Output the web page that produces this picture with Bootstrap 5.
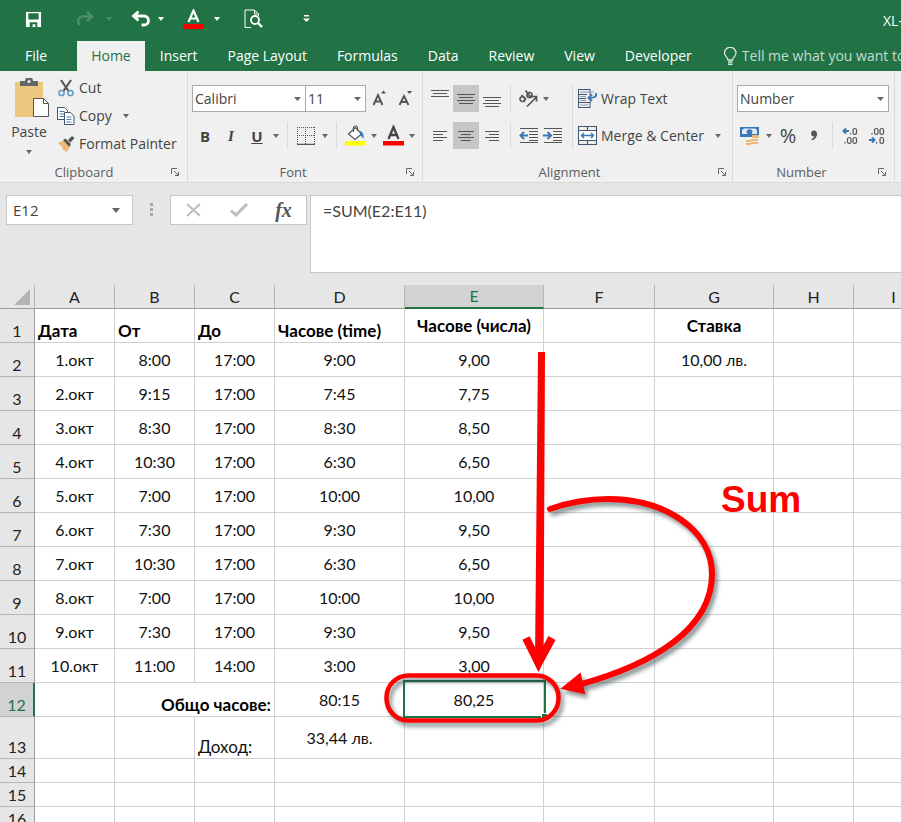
<!DOCTYPE html>
<html lang="bg">
<head>
<meta charset="utf-8">
<meta name="viewport" content="width=device-width, initial-scale=1">
<title>XL</title>
<link href="https://cdn.jsdelivr.net/npm/bootstrap@5.3.0/dist/css/bootstrap.min.css" rel="stylesheet">
<style>
:root{--green:#217346;--ui:"Open Sans","Noto Sans",sans-serif;--cells:Lato,"Open Sans",sans-serif}
body{font-family:var(--ui);font-size:14px;line-height:20px;color:#444}
svg{display:block;flex:none}
.titlebar{background:var(--green);height:41px;padding:0 0 3px 23px;color:#fff}
.tabs{background:var(--green);height:30px;padding-left:10px}
.tabs .tab{color:#fff;padding:5px 15px;text-decoration:none;white-space:nowrap;height:30px}
.tabs .tab.active{background:#f0f0f0;color:var(--green);padding:5px 14px}
.file-tab{margin-right:15px}
.tell{color:#c5dccf;background:none;border:0;outline:0;width:240px;padding:0}
.tell::placeholder{color:#c5dccf;opacity:1}
.ribbon{background:#f0f0f0;height:112px;border-bottom:1px solid #d9d9d9;overflow:hidden}
.group{border-right:1px solid #dadada;padding:14px 4px 0}
.clip-group{width:188px;padding:3px 4px 0 9px}
.font-group{width:235px}
.align-group{width:310px}
.num-group{width:162px}
.group-foot{font-size:13px;color:#5c5c5c;height:20px;margin-top:auto}
.launch{right:0;top:6px}
.tool{background:none;border:0;padding:0;color:#444;display:flex;align-items:center;justify-content:center;height:27px;width:26px;white-space:nowrap}
.tool.on{background:#c6c6c6}
.tool.text{width:auto;gap:4px;justify-content:flex-start}
.tool.drop{width:12px}
.tool.mid{width:24px}
.tool.bar{color:#fff;width:20px;height:30px}
.tool.line{height:28px}
.vline{width:1px;background:#dadada;margin:0 5px;align-self:stretch}
.caret{width:0;height:0;border:3px solid transparent;border-top:4px solid #666;border-bottom:0}
.rows{gap:10px}
.combo{height:27px;flex:none;border:1px solid #ababab;border-radius:0;background:#fff url("data:image/svg+xml,%3Csvg xmlns='http://www.w3.org/2000/svg' width='7' height='4'%3E%3Cpath d='M0 0h7L3.5 4z' fill='%23666'/%3E%3C/svg%3E") no-repeat right 4px center;appearance:none;color:#444;padding:0 2px;outline:0}
.face{width:114px}
.size{width:61px;margin-left:-1px}
.num-format{width:152px}
.glyph{font-weight:700;font-size:15px;color:#444}
.formula{background:#e6e6e6;padding:12px 0 12px 6px}
.box{background:#fff;border:1px solid #c6c6c6;height:30px}
.name-box{width:127px}
.name-box input{border:0;outline:0;width:96px;padding:0 6px;color:#444;background:none;font-size:15px}
.grip{width:37px;height:30px}
.fx-box{width:137px;margin-right:3px}
.fx-box .tool{width:45px;height:28px}
.fx{font-family:"Liberation Serif",serif;font-style:italic;font-weight:700;font-size:20px;color:#555}
.entry{border:1px solid #c6c6c6;border-right:0;height:78px;resize:none;outline:0;padding:5px 12px;color:#444;background:#fff;font-family:var(--cells);font-size:16px}
.sheet{background:#fff}
.cells{table-layout:fixed;width:934px;border-collapse:separate;border-spacing:0;font-family:var(--cells);font-size:16px;line-height:20px;color:#111}
.cells th,.cells td{padding:0 3px;border:0 solid #d0d0d0;border-width:0 1px 1px 0;text-align:center;vertical-align:middle;height:34px;white-space:nowrap;font-weight:400}
.cells thead th{background:#e6e6e6;height:24px;border-right-color:#b5b5b5;border-bottom-color:#9b9b9b;color:#222}
.cells tbody th{background:#e6e6e6;vertical-align:bottom;border-right-color:#9b9b9b;border-bottom-color:#b5b5b5;color:#222;line-height:22px}
.cells tr.tall>*{height:42px}
.cells tr.short>*{height:24px}
.cells .low{vertical-align:bottom;text-align:left;font-size:17px;line-height:22px}
.cells .low.end{text-align:right}
.cells .strong{font-weight:700;font-size:17px;color:#000}
.cells thead th.sel{background:#d2d2d2;color:var(--green);border-bottom:2px solid var(--green)}
.cells tbody th.sel{background:#d2d2d2;color:var(--green);border-right:2px solid var(--green)}
.cells .current::before{content:"";position:absolute;inset:-3px -3px -2px -2px;border:2px solid var(--green)}
.cells .current::after{content:"";position:absolute;right:-4px;bottom:-3px;width:6px;height:6px;background:var(--green);border:1px solid #fff;border-width:1px 0 0 1px}
.notes{left:0;top:0;pointer-events:none}
.notes text{font-family:"Liberation Sans",Arial,sans-serif;font-weight:700;font-size:37px}
.shade{filter:drop-shadow(3px 4px 2px rgba(40,60,60,.55))}
</style>
<script src="https://cdn.jsdelivr.net/npm/bootstrap@5.3.0/dist/js/bootstrap.bundle.min.js"></script>
</head>
<body class="d-flex flex-column vh-100 overflow-hidden">
<header class="titlebar d-flex align-items-center flex-shrink-0">
  <button class="tool bar" aria-label="Save"><svg width="17" height="17" viewBox="0 0 18 18"><path d="M1 1h16v16H1z" fill="#fff"/><path d="M3.500 2.500h11V9h-11zM5 12h8v5h-2v-3H8v3H5z" fill="#217346"/></svg></button>
  <button class="tool bar ms-4 ps-2 w-auto" aria-label="Redo"><svg width="20" height="18" viewBox="0 0 20 18"><path d="M12 2l5 4.500-5 4.500M16 6.500H7.500a4.500 4.500 0 0 0-4 6.500l1.500 2" fill="none" stroke="#4b8d67" stroke-width="2.600"/></svg></button>
  <button class="tool drop ms-2" aria-label="Redo list"><span class="caret" style="border-top-color:#4b8d67"></span></button>
  <button class="tool bar ms-3" aria-label="Undo"><svg width="20" height="18" viewBox="0 0 20 18"><path d="M7.500 1.500L2.500 6l5 4.500M3 6h10a4.500 4.500 0 0 1 0 9h-2.500" fill="none" stroke="#fff" stroke-width="2.800"/></svg></button>
  <button class="tool drop ms-1" aria-label="Undo list"><span class="caret" style="border-top-color:#fff"></span></button>
  <button class="tool bar ms-3" aria-label="Font color"><svg width="21" height="21" viewBox="0 0 21 21"><path d="M5.500 13L10.500 1.500l5 11.500M7.200 9.500h6.600" fill="none" stroke="#fff" stroke-width="2.200"/><path d="M0 15h21v5H0z" fill="#f00"/></svg></button>
  <button class="tool drop ms-1 ps-2" aria-label="Font color list"><span class="caret" style="border-top-color:#fff"></span></button>
  <button class="tool bar ms-4" aria-label="Print preview"><svg width="19" height="20" viewBox="0 0 19 20" fill="none" stroke="#fff"><path d="M7 18.500H1V1h9.500l4 4v2M10.500 1v4h4"/><circle cx="11" cy="11" r="4" stroke-width="1.800"/><path d="M14 14l4 4" stroke-width="2.400"/></svg></button>
  <button class="tool bar ms-4 ps-3 w-auto" aria-label="Customize"><svg width="7" height="8" viewBox="0 0 7 8"><path d="M1 0h5v1.500H1zM0 3.500h7L3.500 7z" fill="#fff"/></svg></button>
  <span class="ms-auto me-1 pe-1 overflow-visible text-nowrap pt-1" style="width:14px">XL-</span>
</header>
<nav class="tabs d-flex flex-shrink-0 overflow-hidden">
  <a class="tab file-tab" href="#">File</a>
  <a class="tab active" href="#" aria-current="page">Home</a>
  <a class="tab" href="#">Insert</a>
  <a class="tab" href="#">Page Layout</a>
  <a class="tab" href="#">Formulas</a>
  <a class="tab" href="#">Data</a>
  <a class="tab" href="#">Review</a>
  <a class="tab" href="#">View</a>
  <a class="tab" href="#">Developer</a>
  <label class="d-flex align-items-center ms-3 gap-1"><svg width="15" height="19" viewBox="0 0 15 19" fill="none" stroke="#d5e6dc" stroke-width="1.300"><path d="M5 13c0-2.500-3.500-3.500-3.500-7a5.500 5.500 0 0 1 11.500 0c0 3.500-3.500 4.500-3.500 7z"/><path d="M5 15h4.500M5 17.200h4.500" stroke-width="1.600"/></svg>
  <input class="tell" type="text" aria-label="Tell me" placeholder="Tell me what you want to do"></label>
</nav>
<section class="ribbon d-flex flex-shrink-0">
  <div class="group clip-group d-flex flex-column flex-shrink-0">
    <div class="d-flex">
      <button class="tool flex-column h-auto w-auto justify-content-start me-2 pt-1" aria-label="Paste">
        <svg width="40" height="40" viewBox="-6 0 40 40"><path d="M0 4h28v35H0z" fill="#ecc77e"/><path d="M5 3h5a4 4 0 0 1 8 0h5v5H5z" fill="#666"/><circle cx="14" cy="3.500" r="1.500" fill="#f0f0f0"/><path d="M18.500 20.500h10l5 5v13h-15z" fill="#fff" stroke="#555"/><path d="M28.500 20.500v5h5" fill="none" stroke="#555"/></svg>
        <span class="mt-1">Paste</span><span class="caret mt-2"></span></button>
      <div>
        <button class="tool text line"><svg width="18" height="18" viewBox="0 0 18 18" fill="none"><path d="M4 1l7.500 11M14 1L6.500 12" stroke="#555" stroke-width="2.200"/><circle cx="4.500" cy="14" r="2.600" stroke="#5b9bc8" stroke-width="1.500"/><circle cx="13.500" cy="14" r="2.600" stroke="#5b9bc8" stroke-width="1.500"/></svg>Cut</button>
        <div class="d-flex"><button class="tool text line"><svg width="18" height="18" viewBox="0 0 18 18" fill="#fff" stroke="#44546a"><path d="M.500.500h7l3 3v9H.500z"/><path d="M2.500 4.500h5M2.500 7h5M2.500 9.500h5" stroke="#4a7ebb"/><path d="M7.500 5.500h6l3.500 3.500v8.500H7.500z"/><path d="M9.500 10h5M9.500 12.500h5M9.500 15h5" stroke="#4a7ebb"/></svg>Copy</button><button class="tool drop line ms-2" aria-label="Copy options"><span class="caret"></span></button></div>
        <button class="tool text line"><svg width="18" height="18" viewBox="0 0 18 18"><path d="M1 8l7-3 5 6-3 6-4-2-1-3z" fill="#ecb97a"/><path d="M6 5l2.500-1.500L14 9l-1.500 3zM11 5l4-4 2.500 2-4 4.500z" fill="#555"/></svg>Format Painter</button>
      </div>
    </div>
    <div class="group-foot position-relative text-center pe-4">Clipboard<button class="tool h-auto w-auto position-absolute launch me-1" aria-label="Clipboard settings"><svg width="8" height="8" viewBox="0 0 8 8" fill="none" stroke="#666"><path d="M.500 6V.500H6M3 3l4 4M7.500 4v3.500H4"/></svg></button></div>
  </div>
  <div class="group font-group d-flex flex-column flex-shrink-0">
    <div class="d-flex flex-column rows">
      <div class="d-flex"><select class="combo face" aria-label="Font"><option>Calibri</option></select><select class="combo size" aria-label="Font size"><option>11</option></select>
        <button class="tool" aria-label="Grow font"><svg width="15" height="17" viewBox="0 0 15 17"><path d="M1.500 15L6 5l4.500 10M3.300 11.500h5.500" fill="none" stroke="#555" stroke-width="1.900"/><path d="M9 3.500l2.500-3 2.500 3z" fill="#555"/></svg></button>
        <button class="tool" aria-label="Shrink font"><svg width="15" height="17" viewBox="0 0 15 17"><path d="M1.500 15L6 6l4.500 9M3.300 12h5.500" fill="none" stroke="#555" stroke-width="1.900"/><path d="M9 1h5l-2.500 3z" fill="#555"/></svg></button></div>
      <div class="d-flex">
        <button class="tool glyph">B</button><button class="tool glyph"><i style="font-family:'Liberation Serif',serif">I</i></button><button class="tool glyph"><u>U</u></button><button class="tool drop" aria-label="Underline styles"><span class="caret"></span></button>
        <span class="vline"></span>
        <button class="tool" aria-label="Borders"><svg width="18" height="18" viewBox="0 0 18 18" fill="none" stroke="#555"><path d="M.500 0v17M17.500 0v17M0 .500h18M8.500 0v17M0 8.500h18" stroke-dasharray="1 1"/><path d="M0 17.500h18" stroke-width="1.500"/></svg></button><button class="tool drop" aria-label="Border styles"><span class="caret"></span></button>
        <span class="vline"></span>
        <button class="tool" aria-label="Fill color"><svg width="21" height="21" viewBox="0 0 21 21"><path d="M3.500 9l7-6.500 6 6.500-6.500 5.500z" fill="#fff" stroke="#555" stroke-width="1.200"/><path d="M8.500 7V3a2 2 0 0 1 4 0v3" fill="none" stroke="#555" stroke-width="1.200"/><path d="M15 6c3 1 4 4 3.500 8-1-2-2-3-3.500-3z" fill="#3b78b5"/><path d="M0 16h21v4.500H0z" fill="#ff0"/></svg></button><button class="tool drop" aria-label="Fill colors"><span class="caret"></span></button>
        <button class="tool" aria-label="Font color"><svg width="21" height="21" viewBox="0 0 21 21"><path d="M5.500 14L10.500 2l5 12M7.200 10h6.600" fill="none" stroke="#444" stroke-width="2.300"/><path d="M0 16h21v4.500H0z" fill="#f00"/></svg></button><button class="tool drop" aria-label="Font colors"><span class="caret"></span></button>
      </div>
    </div>
    <div class="group-foot position-relative text-center pe-4">Font<button class="tool h-auto w-auto position-absolute launch" aria-label="Font settings"><svg width="12" height="8" viewBox="0 0 12 8" fill="none" stroke="#666"><path d="M.500 6V.500H6M3 3l4 4M7.500 4v3.500H4"/></svg></button></div>
  </div>
  <div class="group align-group d-flex flex-column flex-shrink-0">
    <div class="d-flex">
      <div class="d-flex flex-column rows">
        <div class="d-flex">
          <button class="tool" aria-label="Top align"><svg width="18" height="20" viewBox="0 0 18 20" stroke="#555"><path d="M0 1.500h18M2 4.500h14M0 7.500h18"/></svg></button>
          <button class="tool on" aria-label="Middle align"><svg width="18" height="20" viewBox="0 0 18 20" stroke="#555"><path d="M0 5.500h18M2 8.500h14M0 11.500h18M2 14.500h14"/></svg></button>
          <button class="tool" aria-label="Bottom align"><svg width="18" height="20" viewBox="0 0 18 20" stroke="#555"><path d="M0 8.500h18M2 11.500h14M0 14.500h18M2 17.500h14"/></svg></button>
          <span class="vline"></span>
          <button class="tool mid" aria-label="Orientation"><svg width="20" height="20" viewBox="0 0 20 20" fill="none" stroke="#555" stroke-width="1.700"><circle cx="4.500" cy="10" r="2.500"/><path d="M3.500 6l4.500 5M7.500 1.500L13 8.500"/><circle cx="11.500" cy="6" r="2.500"/><path d="M9 17.500L18 8.500M13.500 7.500H18.500V12.500"/></svg></button><button class="tool drop" aria-label="Orientations"><span class="caret"></span></button>
        </div>
        <div class="d-flex">
          <button class="tool" aria-label="Align left"><svg width="14" height="14" viewBox="0 0 14 14" stroke="#555"><path d="M0 2.500h14M0 5.500h10M0 8.500h14M0 11.500h10"/></svg></button>
          <button class="tool on" aria-label="Center"><svg width="18" height="14" viewBox="0 0 18 14" stroke="#555"><path d="M1 2.500h16M4 5.500h10M1 8.500h16M4 11.500h10"/></svg></button>
          <button class="tool" aria-label="Align right"><svg width="14" height="14" viewBox="0 0 14 14" stroke="#555"><path d="M0 2.500h14M4 5.500h10M0 8.500h14M4 11.500h10"/></svg></button>
          <span class="vline"></span>
          <button class="tool mid" aria-label="Decrease indent"><svg width="19" height="17" viewBox="0 0 19 17"><path d="M1 1.500h18M10 4.500h9M10 7.500h9M10 10.500h9M10 13.500h9M1 15.500h18" stroke="#555"/><path d="M9 8.500H2M5 5L1.500 8.500 5 12" fill="none" stroke="#3b78b5" stroke-width="2"/></svg></button>
          <button class="tool mid" aria-label="Increase indent"><svg width="19" height="17" viewBox="0 0 19 17"><path d="M1 1.500h18M10 4.500h9M10 7.500h9M10 10.500h9M10 13.500h9M1 15.500h18" stroke="#555"/><path d="M0 8.500h7M4.500 5L8 8.500 4.500 12" fill="none" stroke="#3b78b5" stroke-width="2"/></svg></button>
        </div>
      </div>
      <span class="vline ms-2"></span>
      <div class="d-flex flex-column rows">
        <button class="tool text"><svg width="19" height="19" viewBox="0 0 19 19" fill="none"><path d="M.500 0v19M0 .500h12M0 5.500h9M0 9.500h8M0 13.500h12M0 18.500h12M12 0v6M12 12v7" stroke="#44546a"/><path d="M2 3h14M2 7.500h6M2 11.500h6M2 16h8" stroke="#7a9cc6"/><path d="M18 4c1 4-2 5-7 5M14 5.500L10.500 9l3.500 3" stroke="#3b78b5" stroke-width="2"/></svg>Wrap Text</button>
        <div class="d-flex"><button class="tool text"><svg width="19" height="19" viewBox="0 0 19 19" fill="none"><path d="M.500.500h18v18H.500zM0 4.500h19M0 14.500h19M9.500 0v4.500M9.500 14.500V19" stroke="#44546a" stroke-width="1.200"/><path d="M1 5h17v9H1z" fill="#fff"/><path d="M3.500 9.500h12M6 7L3.500 9.500 6 12M13 7l2.500 2.500L13 12" stroke="#3b78b5" stroke-width="1.500"/></svg>Merge &amp; Center</button><button class="tool drop ms-2" aria-label="Merge options"><span class="caret"></span></button></div>
      </div>
    </div>
    <div class="group-foot position-relative text-center pe-3">Alignment<button class="tool h-auto w-auto position-absolute launch" aria-label="Alignment settings"><svg width="10" height="8" viewBox="0 0 10 8" fill="none" stroke="#666"><path d="M.500 6V.500H6M3 3l4 4M7.500 4v3.500H4"/></svg></button></div>
  </div>
  <div class="group num-group d-flex flex-column flex-shrink-0">
    <div class="d-flex flex-column rows">
      <select class="combo num-format" aria-label="Number format"><option>Number</option></select>
      <div class="d-flex">
        <button class="tool" aria-label="Currency"><svg width="20" height="20" viewBox="0 0 20 20"><path d="M0 1h19v10H0z" fill="#3b78b5"/><path d="M2 4l2-1.500h11L17 4v4H2z" fill="#dcebf7"/><circle cx="9.500" cy="6" r="2.800" fill="#3b78b5"/><path d="M12 9h7v3h-7zM11 13h7v2h-7zM6 14h5v2H6zM11 16h7v2h-7zM6 17h5v2H6z" fill="#ecb97a"/></svg></button><button class="tool drop" aria-label="Currencies"><span class="caret"></span></button>
        <button class="tool fs-5">%</button>
        <button class="tool" aria-label="Comma style"><svg width="8" height="12" viewBox="0 0 8 12"><circle cx="4" cy="3.500" r="2.900" fill="#555"/><path d="M6.900 3c.4 4-2 6.500-5 7.500L1.500 9C3.500 8 4.500 7 4.500 5z" fill="#555"/></svg></button>
        <span class="vline"></span>
        <button class="tool" aria-label="Increase decimal"><svg width="18" height="18" viewBox="0 0 18 18" fill="none" stroke="#555" stroke-width="1.200"><path d="M7 4H2M4 1.500L1.500 4 4 6.500" stroke="#3b78b5" stroke-width="2"/><path d="M8.500 6v1.500M3 15v1.500"/><rect x="11" y="1.500" width="3.500" height="6" rx="1.700"/><rect x="5.500" y="10.500" width="3.500" height="6" rx="1.700"/><rect x="11" y="10.500" width="3.500" height="6" rx="1.700"/></svg></button>
        <button class="tool" aria-label="Decrease decimal"><svg width="18" height="18" viewBox="0 0 18 18" fill="none" stroke="#555" stroke-width="1.200"><path d="M1 13h5M4 10.500L6.500 13 4 15.500" stroke="#3b78b5" stroke-width="2"/><path d="M4 6v1.500M8.500 15v1.500"/><rect x="6.500" y="1.500" width="3.500" height="6" rx="1.700"/><rect x="12" y="1.500" width="3.500" height="6" rx="1.700"/><rect x="12" y="10.500" width="3.500" height="6" rx="1.700"/></svg></button>
      </div>
    </div>
    <div class="group-foot position-relative text-center pe-4">Number<button class="tool h-auto w-auto position-absolute launch me-1" aria-label="Number settings"><svg width="8" height="8" viewBox="0 0 8 8" fill="none" stroke="#666"><path d="M.500 6V.500H6M3 3l4 4M7.500 4v3.500H4"/></svg></button></div>
  </div>
</section>
<section class="formula d-flex align-items-start flex-shrink-0">
  <div class="box name-box d-flex align-items-center justify-content-between flex-shrink-0 pe-1"><input type="text" value="E12" aria-label="Name box"><button class="tool mid" aria-label="Names"><svg width="8" height="5" viewBox="0 0 8 5"><path d="M0 0h8L4 5z" fill="#666"/></svg></button></div>
  <span class="grip d-flex align-items-center justify-content-center flex-shrink-0"><svg width="3" height="14" viewBox="0 0 3 14" fill="#a6a6a6"><path d="M0 0h3v3H0zM0 5h3v3H0zM0 10h3v3H0z"/></svg></span>
  <div class="box fx-box d-flex flex-shrink-0">
    <button class="tool" aria-label="Cancel"><svg width="15" height="14" viewBox="0 0 15 14"><path d="M1 1l13 12M14 1L1 13" stroke="#bdbdbd" stroke-width="2"/></svg></button>
    <button class="tool" aria-label="Enter"><svg width="18" height="14" viewBox="0 0 18 14"><path d="M1 7.500L6 12 17 1" fill="none" stroke="#bdbdbd" stroke-width="3"/></svg></button>
    <button class="tool fx">fx</button>
  </div>
  <textarea class="entry flex-grow-1" aria-label="Formula" spellcheck="false">=SUM(E2:E11)</textarea>
</section>
<main class="sheet flex-grow-1 position-relative overflow-hidden">
<table class="cells">
<colgroup><col style="width:35px"><col style="width:80px"><col style="width:80px"><col style="width:80px"><col style="width:130px"><col style="width:139px"><col style="width:111px"><col style="width:119px"><col style="width:80px"><col style="width:80px"></colgroup>
<thead><tr><th class="p-0" aria-label="Select all"><svg class="ms-auto me-1" width="16" height="16" viewBox="0 0 16 16"><path d="M16 0v16H0z" fill="#b4b4b4"/></svg></th><th>A</th><th>B</th><th>C</th><th>D</th><th class="sel">E</th><th>F</th><th>G</th><th>H</th><th>I</th></tr></thead>
<tbody>
<tr><th>1</th><td class="low strong">Дата</td><td class="low strong">От</td><td class="low strong">До</td><td class="low strong">Часове (time)</td><td class="strong">Часове (числа)</td><td></td><td class="strong">Ставка</td><td></td><td></td></tr>
<tr><th>2</th><td>1.окт</td><td>8:00</td><td>17:00</td><td>9:00</td><td>9,00</td><td></td><td>10,00 лв.</td><td></td><td></td></tr>
<tr><th>3</th><td>2.окт</td><td>9:15</td><td>17:00</td><td>7:45</td><td>7,75</td><td></td><td></td><td></td><td></td></tr>
<tr><th>4</th><td>3.окт</td><td>8:30</td><td>17:00</td><td>8:30</td><td>8,50</td><td></td><td></td><td></td><td></td></tr>
<tr><th>5</th><td>4.окт</td><td>10:30</td><td>17:00</td><td>6:30</td><td>6,50</td><td></td><td></td><td></td><td></td></tr>
<tr><th>6</th><td>5.окт</td><td>7:00</td><td>17:00</td><td>10:00</td><td>10,00</td><td></td><td></td><td></td><td></td></tr>
<tr><th>7</th><td>6.окт</td><td>7:30</td><td>17:00</td><td>9:30</td><td>9,50</td><td></td><td></td><td></td><td></td></tr>
<tr><th>8</th><td>7.окт</td><td>10:30</td><td>17:00</td><td>6:30</td><td>6,50</td><td></td><td></td><td></td><td></td></tr>
<tr><th>9</th><td>8.окт</td><td>7:00</td><td>17:00</td><td>10:00</td><td>10,00</td><td></td><td></td><td></td><td></td></tr>
<tr><th>10</th><td>9.окт</td><td>7:30</td><td>17:00</td><td>9:30</td><td>9,50</td><td></td><td></td><td></td><td></td></tr>
<tr><th>11</th><td>10.окт</td><td>11:00</td><td>14:00</td><td>3:00</td><td>3,00</td><td></td><td></td><td></td><td></td></tr>
<tr><th class="sel">12</th><td></td><td class="low end strong" colspan="2">Общо часове:</td><td>80:15</td><td class="current position-relative">80,25</td><td></td><td></td><td></td><td></td></tr>
<tr class="tall"><th>13</th><td></td><td></td><td class="low">Доход:</td><td>33,44 лв.</td><td></td><td></td><td></td><td></td><td></td></tr>
<tr class="short"><th>14</th><td></td><td></td><td></td><td></td><td></td><td></td><td></td><td></td><td></td></tr>
<tr class="short"><th>15</th><td></td><td></td><td></td><td></td><td></td><td></td><td></td><td></td><td></td></tr>
<tr class="short"><th>16</th><td></td><td></td><td></td><td></td><td></td><td></td><td></td><td></td><td></td></tr>
</tbody>
</table>
<svg class="notes position-absolute" width="934" height="537" viewBox="0 285 934 537" fill="none" stroke="#f00">
  <g class="shade">
    <rect x="386.500" y="675.500" width="172" height="45" rx="22" stroke-width="4.500"/>
    <path d="M550 509C570 502 590 499 608 499C665 499 712 530 712 574C712 628 655 664 578 685" stroke-width="6" stroke-linecap="round"/>
    <path d="M579 677L566 687.500L582 691z" fill="#f00" stroke-width="5"/>
  </g>
  <path d="M538 352h7l-1.500 308h-8.500z" fill="#f00" stroke="none"/>
  <path d="M526 638L538.500 663L552 638" stroke-width="8"/>
  <path d="M538.500 672l-9-20h18z" fill="#f00" stroke="none"/>
  <text x="721" y="512" fill="#f00" stroke="none">Sum</text>
</svg>
</main>
</body>
</html>
